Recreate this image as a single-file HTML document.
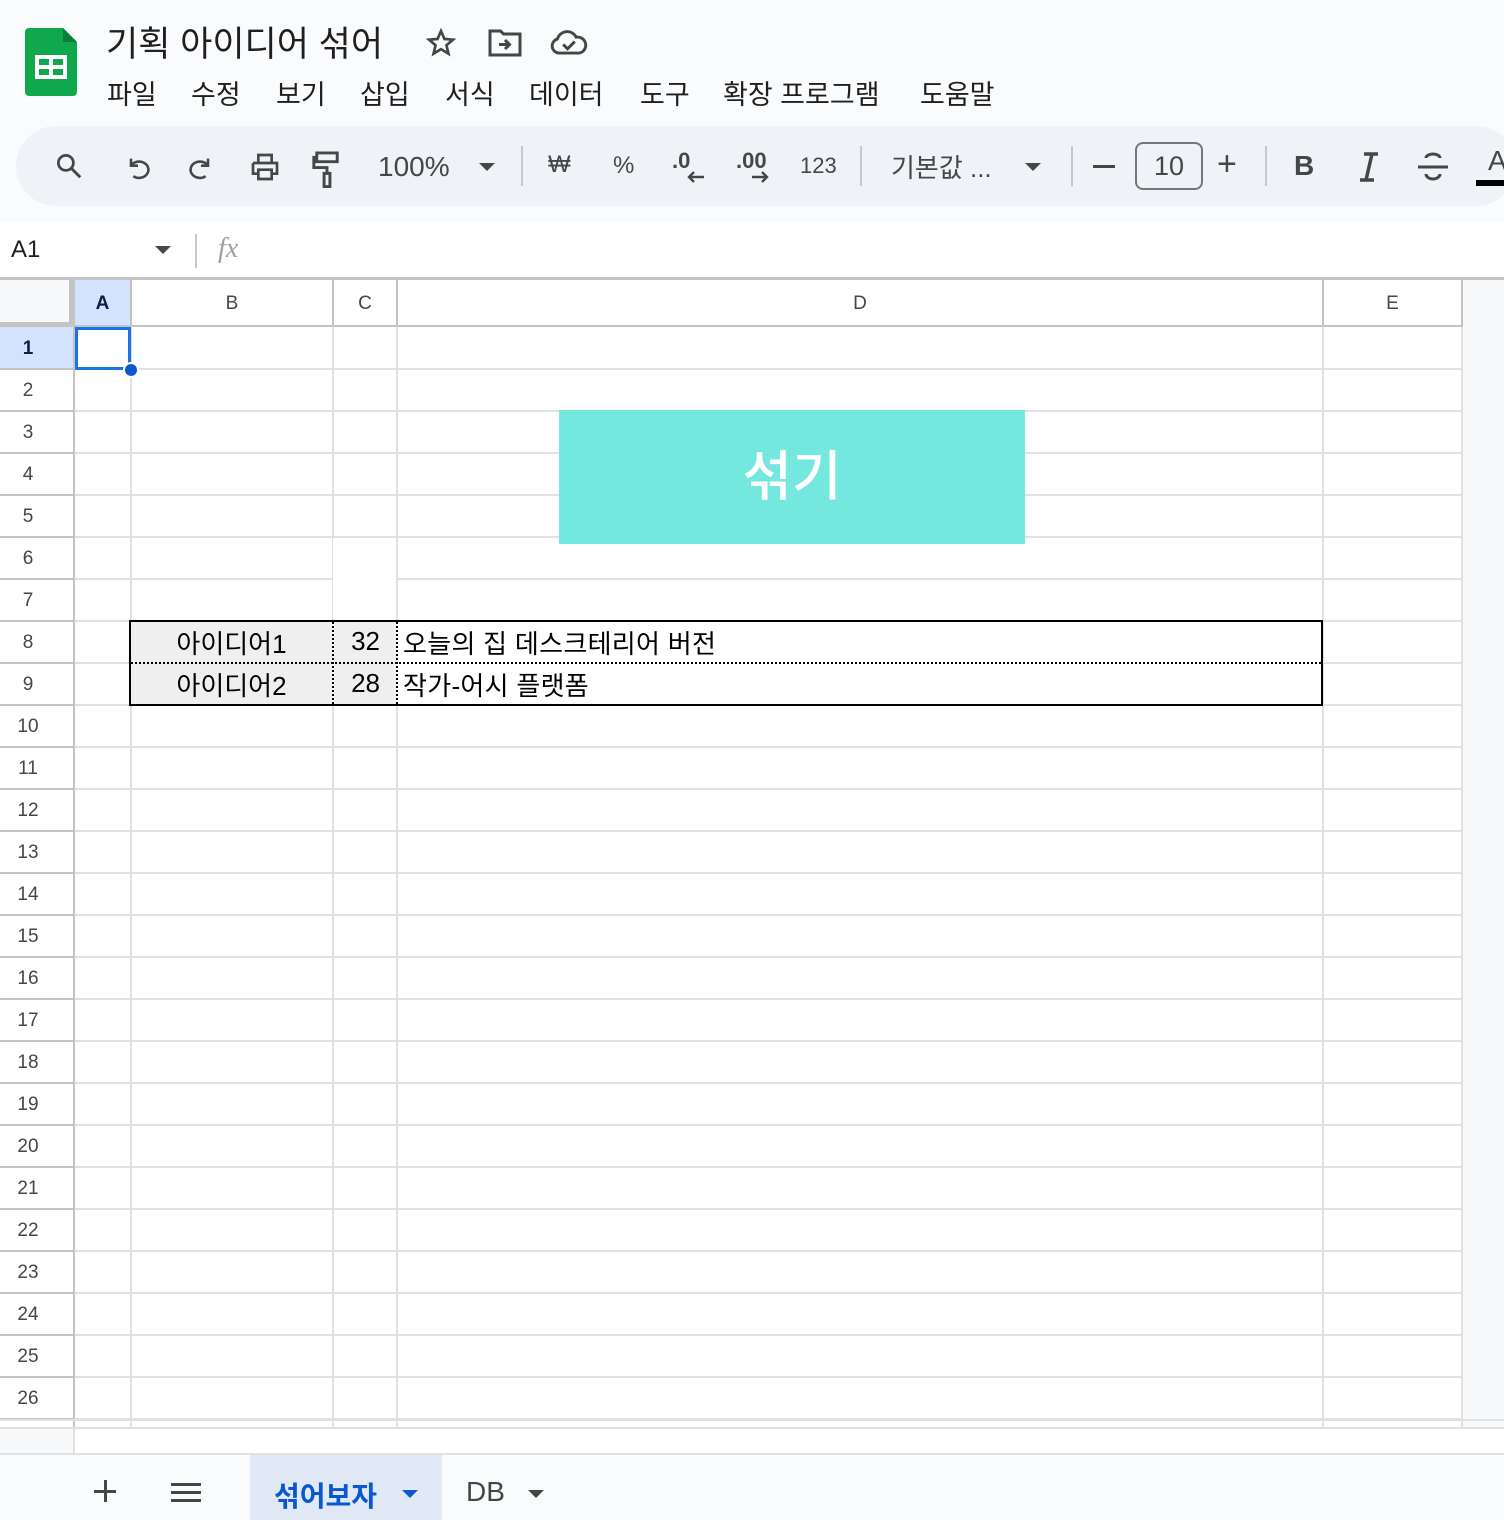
<!DOCTYPE html>
<html><head><meta charset="utf-8"><style>
*{box-sizing:border-box;margin:0;padding:0}
body{width:1504px;height:1520px;overflow:hidden;background:#f9fbfd;font-family:"Liberation Sans","Noto Sans CJK KR",sans-serif;color:#1f1f1f;position:relative}
.a{position:absolute}
.menu span{position:absolute;top:73px;font-size:27px;color:#1f1f1f}
.tb{position:absolute;top:126px;left:16px;width:1500px;height:80px;border-radius:40px;background:#eff3f8}
.ic{position:absolute;color:#444746;font-size:26px}
.vl{position:absolute;width:2px;background:#c7c7c7}
.rn{position:absolute;left:0;width:56px;text-align:center;font-size:19px;color:#444746}
.ch{position:absolute;top:280px;height:47px;line-height:47px;text-align:center;font-size:19px;color:#444746;background:#fff}
.tri{position:absolute;width:0;height:0;border-left:8px solid transparent;border-right:8px solid transparent;border-top:8px solid #444746}
</style></head><body>
<svg class="a" style="left:25px;top:28px" width="52" height="68" viewBox="0 0 52 68"><path d="M4 0h34l14 14v50a4 4 0 0 1-4 4H4a4 4 0 0 1-4-4V4a4 4 0 0 1 4-4z" fill="#0fa84d"/><path d="M38 0l14 14H38z" fill="#0a7d37"/><rect x="10" y="27" width="32" height="24" fill="#fff"/><rect x="14" y="31" width="10" height="6" fill="#0fa84d"/><rect x="28" y="31" width="10" height="6" fill="#0fa84d"/><rect x="14" y="41" width="10" height="6" fill="#0fa84d"/><rect x="28" y="41" width="10" height="6" fill="#0fa84d"/></svg>
<div class="a" style="left:106px;top:16px;font-size:35px">기획 아이디어 섞어</div>
<svg class="a" style="left:424px;top:27px" width="34" height="32" viewBox="0 0 24 24"><path d="M12 3l2.6 6 6.4.5-4.9 4.2 1.5 6.3L12 16.6 6.4 20l1.5-6.3L3 9.5 9.4 9z" fill="none" stroke="#444746" stroke-width="2"/></svg>
<svg class="a" style="left:487px;top:28px" width="36" height="30" viewBox="0 0 24 20"><path d="M2 2h7l2 2h11v14H2z" fill="none" stroke="#444746" stroke-width="2"/><path d="M8 11h7m-3-3l3 3-3 3" fill="none" stroke="#444746" stroke-width="2"/></svg>
<svg class="a" style="left:549px;top:30px" width="40" height="26" viewBox="0 0 26 18"><path d="M6 16a5 5 0 0 1-1-9.8A7 7 0 0 1 18 5a5 5 0 0 1 2 11z" fill="none" stroke="#444746" stroke-width="2"/><path d="M9 10l3 3 5-5" fill="none" stroke="#444746" stroke-width="2"/></svg>
<div class="menu"><span style="left:107px">파일</span><span style="left:191px">수정</span><span style="left:276px">보기</span><span style="left:360px">삽입</span><span style="left:445px">서식</span><span style="left:529px">데이터</span><span style="left:640px">도구</span><span style="left:723px">확장 프로그램</span><span style="left:920px">도움말</span></div>
<div class="tb"></div>
<svg class="a" style="left:54px;top:151px" width="30" height="30" viewBox="0 0 24 24"><circle cx="9.5" cy="9.5" r="6" fill="none" stroke="#444746" stroke-width="2.2"/><path d="M14 14l7 7" stroke="#444746" stroke-width="2.4"/></svg>
<svg class="a" style="left:124px;top:154px" width="28" height="28" viewBox="0 0 24 24"><path d="M6 4v6h6M6 10a8 7 0 1 1 2 9" fill="none" stroke="#444746" stroke-width="2.2"/></svg>
<svg class="a" style="left:187px;top:154px" width="28" height="28" viewBox="0 0 24 24"><path d="M18 4v6h-6M18 10a8 7 0 1 0-2 9" fill="none" stroke="#444746" stroke-width="2.2"/></svg>
<svg class="a" style="left:248px;top:151px" width="34" height="32" viewBox="0 0 24 24"><path d="M7 8V3h10v5M3 9h18v8h-4M7 17H3V9M7 14h10v7H7z" fill="none" stroke="#444746" stroke-width="2"/></svg>
<svg class="a" style="left:312px;top:150px" width="30" height="38" viewBox="0 0 20 26"><path d="M3 2h14v6H3zM3 5H1v7h9v4M8 16h4v9H8z" fill="none" stroke="#444746" stroke-width="2"/></svg>
<div class="ic" style="left:378px;top:151px;font-size:28px">100%</div>
<div class="tri" style="left:479px;top:163px"></div>
<div class="vl" style="left:521px;top:146px;height:40px"></div>
<div class="ic" style="left:548px;top:151px;font-size:24px">₩</div>
<div class="ic" style="left:613px;top:152px;font-size:24px">%</div>
<div class="ic" style="left:672px;top:148px;font-size:22px;font-weight:bold">.0</div>
<svg class="a" style="left:686px;top:170px" width="20" height="14" viewBox="0 0 20 14"><path d="M18 7H3m5-5L3 7l5 5" fill="none" stroke="#444746" stroke-width="2.4"/></svg>
<div class="ic" style="left:736px;top:148px;font-size:22px;font-weight:bold">.00</div>
<svg class="a" style="left:750px;top:170px" width="20" height="14" viewBox="0 0 20 14"><path d="M2 7h15m-5-5l5 5-5 5" fill="none" stroke="#444746" stroke-width="2.4"/></svg>
<div class="ic" style="left:800px;top:153px;font-size:22px">123</div>
<div class="vl" style="left:860px;top:146px;height:40px"></div>
<div class="ic" style="left:891px;top:148px;font-size:26px">기본값 ...</div>
<div class="tri" style="left:1025px;top:163px"></div>
<div class="vl" style="left:1071px;top:146px;height:40px"></div>
<div class="a" style="left:1093px;top:165px;width:22px;height:3px;background:#444746"></div>
<div class="a" style="left:1135px;top:142px;width:68px;height:48px;border:2px solid #747775;border-radius:8px;text-align:center;line-height:44px;font-size:27px;color:#444746">10</div>
<div class="ic" style="left:1217px;top:145px;font-size:34px">+</div>
<div class="vl" style="left:1265px;top:146px;height:40px"></div>
<div class="ic" style="left:1294px;top:150px;font-size:28px;font-weight:bold">B</div>
<svg class="a" style="left:1356px;top:152px" width="26" height="30" viewBox="0 0 26 30"><path d="M8 2h14M4 28h14M16 2L10 28" fill="none" stroke="#444746" stroke-width="3.5"/></svg>
<svg class="a" style="left:1416px;top:150px" width="34" height="34" viewBox="0 0 34 34"><path d="M2 17h30M10 8a7 4 0 0 1 14 0M10 24a7 5 0 0 0 14 0" fill="none" stroke="#444746" stroke-width="3"/></svg>
<div class="ic" style="left:1488px;top:145px;font-size:28px">A</div>
<div class="a" style="left:1476px;top:180px;width:28px;height:6px;background:#000"></div>
<div class="a" style="left:0;top:222px;width:1504px;height:56px;background:#fff"></div>
<div class="a" style="left:11px;top:236px;font-size:24px">A1</div>
<div class="tri" style="left:155px;top:246px"></div>
<div class="a" style="left:195px;top:234px;width:2px;height:34px;background:#c7c7c7"></div>
<div class="a" style="left:218px;top:233px;font-size:28px;color:#9aa0a6;font-style:italic;font-family:'Liberation Serif',serif">fx</div>
<div class="a" style="left:0;top:277px;width:1504px;height:3px;background:#c4c4c4"></div>
<div class="a" style="left:0;top:280px;width:1504px;height:1147px;background:#fff"></div>
<div class="a" style="left:1462px;top:280px;width:42px;height:1147px;background:#f8f9fa"></div>
<div class="a" style="left:0;top:280px;width:74px;height:47px;background:#f8f9fa;border-right:5px solid #c4c4c4;border-bottom:5px solid #c4c4c4"></div>
<div class="a" style="left:75px;top:328px;width:1387px;height:1092px;background:repeating-linear-gradient(to bottom,transparent 0 40px,#e1e1e1 40px 42px)"></div>
<div class="a" style="left:0;top:328px;width:74px;height:1092px;background:repeating-linear-gradient(to bottom,transparent 0 40px,#c4c4c4 40px 42px)"></div>
<div class="a" style="left:130px;top:327px;width:2px;height:1100px;background:#e1e1e1"></div>
<div class="a" style="left:332px;top:327px;width:2px;height:1100px;background:#e1e1e1"></div>
<div class="a" style="left:396px;top:327px;width:2px;height:1100px;background:#e1e1e1"></div>
<div class="a" style="left:1322px;top:327px;width:2px;height:1100px;background:#e1e1e1"></div>
<div class="a" style="left:1461px;top:280px;width:2px;height:1147px;background:#e1e1e1"></div>
<div class="a" style="left:333px;top:539px;width:63px;height:80px;background:#fff"></div>
<div class="a" style="left:73px;top:280px;width:2px;height:1147px;background:#c4c4c4"></div>
<div class="ch" style="left:75px;width:55px;background:#d3e3fd;color:#0b1f44;font-weight:bold">A</div>
<div class="ch" style="left:132px;width:200px">B</div>
<div class="ch" style="left:334px;width:62px">C</div>
<div class="ch" style="left:398px;width:924px">D</div>
<div class="ch" style="left:1324px;width:137px">E</div>
<div class="a" style="left:130px;top:280px;width:2px;height:47px;background:#c4c4c4"></div>
<div class="a" style="left:332px;top:280px;width:2px;height:47px;background:#c4c4c4"></div>
<div class="a" style="left:396px;top:280px;width:2px;height:47px;background:#c4c4c4"></div>
<div class="a" style="left:1322px;top:280px;width:2px;height:47px;background:#c4c4c4"></div>
<div class="a" style="left:1461px;top:280px;width:2px;height:47px;background:#c4c4c4"></div>
<div class="a" style="left:75px;top:325px;width:1387px;height:2px;background:#c4c4c4"></div>
<div class="a" style="left:0;top:327px;width:73px;height:41px;background:#d3e3fd"></div>
<div class="rn" style="top:338px;font-weight:bold;color:#0b1f44">1</div>
<div class="rn" style="top:380px">2</div><div class="rn" style="top:422px">3</div><div class="rn" style="top:464px">4</div><div class="rn" style="top:506px">5</div><div class="rn" style="top:548px">6</div><div class="rn" style="top:590px">7</div><div class="rn" style="top:632px">8</div><div class="rn" style="top:674px">9</div><div class="rn" style="top:716px">10</div><div class="rn" style="top:758px">11</div><div class="rn" style="top:800px">12</div><div class="rn" style="top:842px">13</div><div class="rn" style="top:884px">14</div><div class="rn" style="top:926px">15</div><div class="rn" style="top:968px">16</div><div class="rn" style="top:1010px">17</div><div class="rn" style="top:1052px">18</div><div class="rn" style="top:1094px">19</div><div class="rn" style="top:1136px">20</div><div class="rn" style="top:1178px">21</div><div class="rn" style="top:1220px">22</div><div class="rn" style="top:1262px">23</div><div class="rn" style="top:1304px">24</div><div class="rn" style="top:1346px">25</div><div class="rn" style="top:1388px">26</div>
<div class="a" style="left:75px;top:327px;width:56px;height:43px;border:3px solid #1a73e8"></div>
<div class="a" style="left:123px;top:362px;width:16px;height:16px;border-radius:50%;background:#0b57d0;border:2px solid #fff"></div>
<div class="a" style="left:559px;top:410px;width:466px;height:134px;background:#74e7de;color:#fff;font-size:54px;text-align:center;line-height:134px;font-weight:500">섞기</div>
<div class="a" style="left:129px;top:620px;width:1194px;height:86px;border:2px solid #000;background:#fff"></div>
<div class="a" style="left:131px;top:622px;width:201px;height:82px;background:#efefef"></div>
<div class="a" style="left:334px;top:622px;width:62px;height:82px;background:#efefef"></div>
<div class="a" style="left:131px;top:662px;width:1190px;border-top:2px dotted #000"></div>
<div class="a" style="left:332px;top:622px;height:82px;border-left:2px dotted #000"></div>
<div class="a" style="left:396px;top:622px;height:82px;border-left:2px dotted #000"></div>
<div class="a" style="left:131px;top:624px;width:201px;text-align:center;font-size:26px;color:#000">아이디어1</div>
<div class="a" style="left:131px;top:666px;width:201px;text-align:center;font-size:26px;color:#000">아이디어2</div>
<div class="a" style="left:334px;top:626px;width:46px;text-align:right;font-size:26px;color:#000">32</div>
<div class="a" style="left:334px;top:668px;width:46px;text-align:right;font-size:26px;color:#000">28</div>
<div class="a" style="left:403px;top:624px;font-size:26px;color:#000;letter-spacing:0.3px">오늘의 집 데스크테리어 버전</div>
<div class="a" style="left:403px;top:666px;font-size:26px;color:#000;letter-spacing:0.3px">작가-어시 플랫폼</div>
<div class="a" style="left:0;top:1419px;width:1504px;height:2px;background:#e1e1e1"></div>
<div class="a" style="left:0;top:1427px;width:1504px;height:26px;background:#fff;border-top:2px solid #e1e1e1"></div>
<div class="a" style="left:0;top:1429px;width:75px;height:24px;background:#f8f9fa;border-right:2px solid #e1e1e1"></div>
<div class="a" style="left:0;top:1453px;width:1504px;height:67px;background:#f9fbfd;border-top:2px solid #e1e1e1"></div>
<div class="a" style="left:94px;top:1490px;width:22px;height:3px;background:#444746"></div>
<div class="a" style="left:104px;top:1480px;width:3px;height:22px;background:#444746"></div>
<div class="a" style="left:171px;top:1483px;width:30px;height:3px;background:#444746;box-shadow:0 8px 0 #444746,0 16px 0 #444746"></div>
<div class="a" style="left:250px;top:1455px;width:192px;height:65px;background:#e1e9f7"></div>
<div class="a" style="left:274px;top:1475px;font-size:28px;font-weight:bold;color:#0b57d0">섞어보자</div>
<div class="tri" style="left:402px;top:1490px;border-top-color:#0b57d0"></div>
<div class="a" style="left:466px;top:1476px;font-size:28px;color:#444746">DB</div>
<div class="tri" style="left:528px;top:1490px"></div>
</body></html>
